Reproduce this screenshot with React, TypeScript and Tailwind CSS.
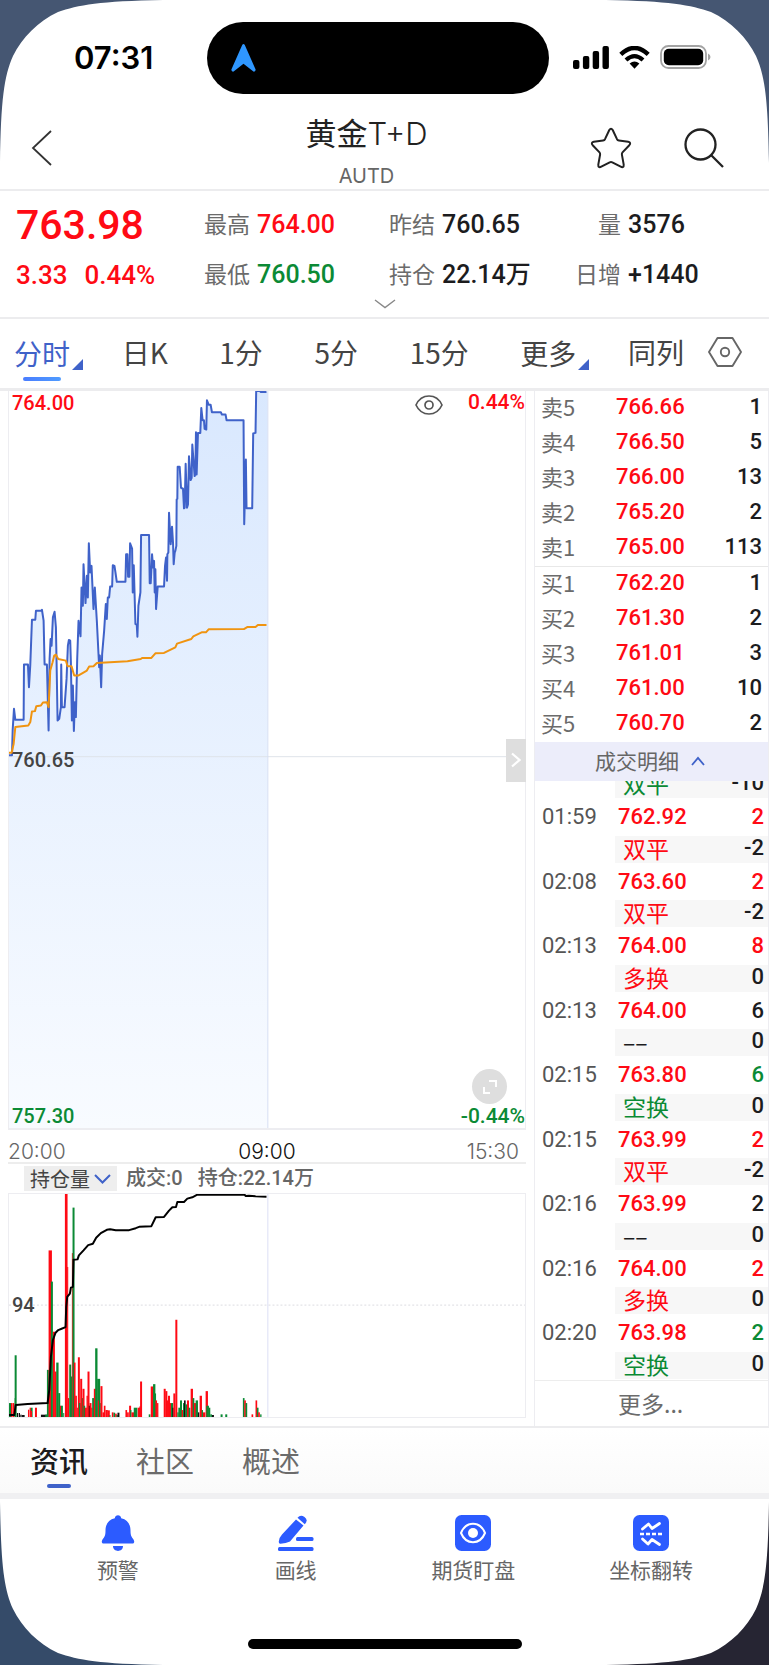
import React from "react";

const NUM = "font-['Roboto','Noto_Sans_CJK_SC',sans-serif] font-medium";

type Tone = "red" | "green" | "dark";

const toneClass: Record<Tone, string> = {
  red: "text-[#ff0a14]",
  green: "text-[#0b8a35]",
  dark: "text-[#1c1c1e]",
};

type Quote = { label: string; value: string; tone: Tone };

const quotes: Quote[][] = [
  [
    { label: "最高", value: "764.00", tone: "red" },
    { label: "最低", value: "760.50", tone: "green" },
  ],
  [
    { label: "昨结", value: "760.65", tone: "dark" },
    { label: "持仓", value: "22.14万", tone: "dark" },
  ],
  [
    { label: "量", value: "3576", tone: "dark" },
    { label: "日增", value: "+1440", tone: "dark" },
  ],
];

const asks: [string, string, string][] = [
  ["卖5", "766.66", "1"],
  ["卖4", "766.50", "5"],
  ["卖3", "766.00", "13"],
  ["卖2", "765.20", "2"],
  ["卖1", "765.00", "113"],
];

const bids: [string, string, string][] = [
  ["买1", "762.20", "1"],
  ["买2", "761.30", "2"],
  ["买3", "761.01", "3"],
  ["买4", "761.00", "10"],
  ["买5", "760.70", "2"],
];

type Trade = {
  time: string;
  price: string;
  volume: string;
  tone: Tone;
  kind: string;
  kindTone: Tone;
  delta: string;
};

const trades: Trade[] = [
  { time: "01:59", price: "762.92", volume: "2", tone: "red", kind: "双平", kindTone: "red", delta: "-2" },
  { time: "02:08", price: "763.60", volume: "2", tone: "red", kind: "双平", kindTone: "red", delta: "-2" },
  { time: "02:13", price: "764.00", volume: "8", tone: "red", kind: "多换", kindTone: "red", delta: "0" },
  { time: "02:13", price: "764.00", volume: "6", tone: "dark", kind: "––", kindTone: "dark", delta: "0" },
  { time: "02:15", price: "763.80", volume: "6", tone: "green", kind: "空换", kindTone: "green", delta: "0" },
  { time: "02:15", price: "763.99", volume: "2", tone: "red", kind: "双平", kindTone: "red", delta: "-2" },
  { time: "02:16", price: "763.99", volume: "2", tone: "dark", kind: "––", kindTone: "dark", delta: "0" },
  { time: "02:16", price: "764.00", volume: "2", tone: "red", kind: "多换", kindTone: "red", delta: "0" },
  { time: "02:20", price: "763.98", volume: "2", tone: "green", kind: "空换", kindTone: "green", delta: "0" },
];

const PRICE =
  "24,1130 33,1130 35,1055 39,990 43,1023 68,1023 69,857 81,857 84,925 88,857 93,722 103,722 105,695 121,695 123,692 128,725 131,857 138,857 143,1055 146,840 149,780 152,800 156,715 161,698 165,745 167,850 170,1025 175,1020 180,985 181,857 183,985 191,985 197,900 201,800 204,783 208,785 210,850 213,1025 216,920 219,1057 222,970 225,1015 229,840 233,725 239,772 242,625 246,680 248,555 254,672 258,590 261,655 264,492 268,580 272,560 278,690 282,625 288,725 295,865 297,830 301,925 304,825 310,755 315,675 318,720 321,655 325,655 328,622 334,622 336,558 341,560 344,580 348,608 374,608 376,525 380,525 382,593 386,593 388,492 394,508 396,640 399,558 404,735 408,737 410,773 413,680 419,640 421,467 445,467 447,612 450,612 454,525 457,565 460,545 462,640 464,570 466,690 471,622 490,622 493,560 496,535 499,605 500,525 503,520 505,400 510,495 514,442 517,490 519,555 522,520 524,515 527,500 528,360 530,358 531,262 537,262 541,325 547,328 550,387 552,385 555,253 559,385 562,375 565,230 570,302 573,295 575,195 582,290 584,285 586,158 588,285 592,160 599,160 602,85 606,122 610,122 612,148 617,150 619,62 624,75 630,75 634,98 661,98 664,105 675,105 678,122 729,122 731,435 736,240 738,387 755,387 758,162 765,160 767,34 778,34 781,37 798,37";

const AVERAGE =
  "24,1122 32,1122 38,1095 43,1045 82,1040 88,1030 93,998 102,997 106,982 120,980 126,971 138,970 143,985 148,875 155,850 160,830 165,827 172,840 195,845 200,862 212,862 220,890 232,890 258,875 265,863 278,862 288,852 380,847 420,840 424,837 452,837 464,823 490,822 524,805 529,794 572,780 578,772 603,760 616,760 624,751 730,750 740,744 765,744 772,738 798,738";

const HOLDING =
  "24,676 40,676 44,646 80,643 140,640 145,600 150,500 156,450 164,428 172,420 182,416 194,411 196,350 199,320 207,310 210,292 216,290 218,208 230,207 234,195 248,180 262,164 276,160 286,142 300,128 318,118 328,116 345,119 385,119 405,113 415,109 452,107 465,80 490,79 505,60 515,50 526,49 530,34 550,34 560,24 575,20 590,12 732,12 735,16 745,15 765,17 798,18";

/* [left, width, top, colour] */
const bars: [number, number, number, "r" | "g" | "k"][] = [
  [24, 6, 640, "g"], [30, 5, 640, "r"], [36, 4, 640, "r"], [41, 6, 496, "g"], [41, 4, 625, "g"], [48, 4, 670, "k"],
  [54, 3, 670, "k"], [58, 4, 675, "k"], [63, 8, 676, "k"], [81, 4, 660, "r"], [86, 4, 654, "r"], [90, 5, 654, "g"],
  [90, 3, 664, "r"], [102, 6, 654, "r"], [120, 18, 675, "k"], [133, 7, 675, "g"], [138, 6, 540, "g"],
  [143, 10, 180, "r"], [150, 6, 274, "g"], [156, 6, 425, "r"], [161, 6, 545, "r"], [166, 7, 518, "g"],
  [172, 6, 610, "g"], [177, 4, 648, "r"], [180, 6, 648, "g"], [187, 3, 670, "g"], [192, 8, 10, "r"], [199, 3, 230, "r"],
  [201, 4, 625, "r"], [205, 6, 524, "g"], [210, 5, 560, "g"], [213, 3, 188, "r"], [215, 6, 51, "g"], [219, 5, 518, "r"],
  [223, 5, 618, "r"], [228, 3, 654, "r"], [231, 6, 502, "r"], [234, 6, 640, "g"], [238, 6, 567, "r"],
  [243, 5, 625, "g"], [245, 6, 597, "r"], [248, 5, 648, "g"], [252, 6, 654, "r"], [257, 4, 618, "r"],
  [260, 6, 545, "r"], [264, 5, 648, "k"], [266, 6, 640, "r"], [271, 4, 654, "r"], [274, 6, 625, "g"],
  [279, 6, 597, "r"], [283, 7, 475, "g"], [289, 9, 567, "g"], [291, 3, 632, "r"], [297, 3, 640, "g"],
  [299, 6, 589, "r"], [305, 5, 668, "r"], [309, 5, 648, "r"], [314, 7, 661, "r"], [320, 7, 662, "r"],
  [326, 3, 676, "g"], [333, 5, 668, "r"], [338, 5, 669, "g"], [343, 5, 672, "r"], [347, 4, 676, "g"], [350, 6, 669, "k"],
  [374, 5, 661, "r"], [379, 5, 668, "r"], [385, 6, 648, "r"], [388, 4, 661, "g"], [392, 8, 668, "r"],
  [399, 11, 654, "g"], [411, 8, 654, "r"], [416, 4, 650, "r"], [418, 6, 575, "r"], [444, 5, 674, "g"],
  [450, 9, 590, "r"], [457, 7, 583, "g"], [462, 4, 611, "g"], [464, 5, 632, "r"], [469, 4, 640, "r"],
  [489, 6, 597, "r"], [494, 6, 604, "r"], [499, 4, 632, "r"], [502, 6, 618, "r"], [507, 4, 640, "r"],
  [511, 6, 640, "g"], [515, 4, 654, "k"], [518, 6, 611, "r"], [524, 6, 389, "r"], [530, 4, 668, "g"],
  [533, 6, 654, "g"], [538, 6, 632, "g"], [543, 4, 661, "r"], [547, 5, 640, "g"], [550, 5, 632, "k"],
  [554, 6, 644, "g"], [559, 6, 632, "r"], [564, 5, 654, "g"], [570, 7, 597, "r"], [576, 5, 625, "g"],
  [580, 6, 640, "r"], [585, 7, 632, "g"], [592, 4, 668, "k"], [597, 7, 618, "r"], [603, 4, 661, "g"],
  [607, 7, 668, "r"], [615, 7, 604, "r"], [617, 8, 648, "g"], [624, 5, 654, "g"], [629, 5, 674, "g"],
  [634, 6, 676, "k"], [660, 6, 674, "g"], [674, 6, 674, "g"], [727, 5, 625, "g"], [731, 5, 632, "r"],
  [735, 5, 640, "g"], [753, 5, 674, "r"], [765, 5, 632, "r"], [769, 5, 654, "g"], [773, 5, 668, "r"], [779, 4, 674, "g"],
];

const barFill = { r: "#ff0a14", g: "#0b8a35", k: "#111111" };

function Corner({ className, fill }: { className: string; fill: string }) {
  return (
    <svg viewBox="0 0 164 164" className={`pointer-events-none absolute size-[164px] ${className}`} aria-hidden="true">
      <path d="M0 0H163C100 1 78 5 58 12C38 21 22 38 13 56C4 76 1 100 0 163Z" fill={fill} />
    </svg>
  );
}

function StatusBar() {
  return (
    <div className="grid grid-cols-[1fr_342px_1fr] items-center pt-[22px] pr-[35px] pl-[22px]">
      <div className="pl-[52px] font-['Inter',sans-serif] text-[31px] leading-[38px] font-semibold text-black">07:31</div>
      <div className="flex h-[72px] items-center rounded-[36px] bg-black pl-[24px]">
        <svg viewBox="0 0 25 28" className="h-7 w-[25px]" aria-hidden="true">
          <path d="M11.2 1Q12.5-.8 13.8 1L24.6 25.5Q24.8 28 22.4 27.6L12.5 19.8L2.6 27.6Q.2 28 .4 25.5Z" fill="#2f97ff" />
        </svg>
      </div>
      <div className="flex items-center gap-[10px] pb-[2px] pl-[24px]">
        <svg viewBox="0 0 36 23" className="h-[23px] w-9 shrink-0" aria-hidden="true">
          <rect x="0" y="14" width="6.4" height="9" rx="2" />
          <rect x="9.9" y="10" width="6.4" height="13" rx="2" />
          <rect x="19.7" y="5" width="6.4" height="18" rx="2" />
          <rect x="29.5" y="0" width="6.4" height="23" rx="2" />
        </svg>
        <svg viewBox="0 0 31 23" className="h-[23px] w-[31px] shrink-0" aria-hidden="true">
          <path d="M1.8 8.4Q15.5-4.4 29.2 8.4" fill="none" stroke="#000" strokeWidth="4.4" />
          <path d="M7 14Q15.5 6.2 24 14" fill="none" stroke="#000" strokeWidth="4.2" />
          <path d="M10.6 17.6Q15.5 13.6 20.4 17.6L15.5 22.8Z" />
        </svg>
        <svg viewBox="0 0 51 24" className="h-6 w-[51px] shrink-0" aria-hidden="true">
          <rect x="1" y="1" width="45" height="22" rx="7.5" fill="none" stroke="#a3a3a3" strokeWidth="1.8" />
          <rect x="3.8" y="3.7" width="39.4" height="16.6" rx="5" />
          <path d="M48 8.5Q50.5 9.5 50.5 12T48 15.5Z" fill="#a3a3a3" />
        </svg>
      </div>
    </div>
  );
}

function TitleBar() {
  return (
    <header className="flex h-[97px] items-start border-b-2 border-[#ececee] pr-[44px] pl-[31px]">
      <button aria-label="返回" className="mt-[36px] w-[112px]">
        <svg viewBox="0 0 22 36" className="h-9 w-[22px]" fill="none" stroke="#333" strokeWidth="1.8">
          <path d="M20 1L2 18L20 35" />
        </svg>
      </button>
      <div className="flex flex-1 flex-col items-center font-['Noto_Sans_CJK_SC',sans-serif]">
        <h1 className="mt-[17px] text-[31px] leading-[42px] text-[#222]">
          黄金<span className="font-['Inter','Noto_Sans_CJK_SC',sans-serif] font-light">T+D</span>
        </h1>
        <p className="mt-[9px] font-['Inter',sans-serif] text-[20px] leading-6 text-[#666]">AUTD</p>
      </div>
      <div className="mt-[33px] flex gap-[51px]">
        <button aria-label="收藏">
          <svg viewBox="0 0 42 42" className="size-[42px]" fill="none" stroke="#222" strokeWidth="2" strokeLinejoin="round">
            <path d="M19.3 3Q21 .4 22.7 3L27 12.2Q27.6 13.3 28.9 13.5L38.2 14.8Q41.5 15.5 39.3 18.2L32.5 25.4Q31.7 26.3 31.9 27.6L33.7 37.6Q33.9 41.3 30.7 39.7L22.3 35.3Q21 34.7 19.7 35.3L11.3 39.7Q8.1 41.3 8.3 37.6L10.1 27.6Q10.3 26.3 9.5 25.4L2.7 18.2Q.5 15.5 3.8 14.8L13.1 13.5Q14.4 13.3 15 12.2Z" />
          </svg>
        </button>
        <button aria-label="搜索">
          <svg viewBox="0 0 42 42" className="size-[42px]" fill="none" stroke="#222" strokeWidth="2.3">
            <circle cx="17.5" cy="17.5" r="15" />
            <path d="M28 28L40 40" />
          </svg>
        </button>
      </div>
    </header>
  );
}

function QuotePanel() {
  return (
    <section className={`${NUM} border-b-2 border-[#ececee]`}>
      <div className="grid h-[108px] grid-cols-[188px_185px_186px_1fr] pt-[9px] pl-4 text-[25px]">
        <div className="text-[#ff0a14]">
          <div className="text-[41px] leading-[50px]">763.98</div>
          <div className="flex gap-[17px] text-[26px] leading-[50px]">
            <span>3.33</span>
            <span>0.44%</span>
          </div>
        </div>
        {quotes.map((group, i) => (
          <dl key={i} className="leading-[50px] whitespace-nowrap">
            {group.map((q) => (
              <div key={q.label} className="flex gap-[7px]">
                <dt className={`font-['Noto_Sans_CJK_SC',sans-serif] text-[23px] leading-[46px] font-normal text-[#6b6b6b] ${i === 2 ? "w-[46px] text-right" : ""}`}>
                  {q.label}
                </dt>
                <dd className={toneClass[q.tone]}>{q.value}</dd>
              </div>
            ))}
          </dl>
        ))}
      </div>
      <button aria-label="展开行情" className="flex h-[18px] w-full justify-center">
        <svg viewBox="0 0 22 10" className="h-[10px] w-[22px]" fill="none" stroke="#888" strokeWidth="1.4">
          <path d="M1 1L11 8.5L21 1" />
        </svg>
      </button>
    </section>
  );
}

function Wedge() {
  return (
    <svg viewBox="0 0 11 11" className="mt-6 -mr-[13px] ml-0.5 size-[11px]" aria-hidden="true">
      <path d="M11 0V11H0Z" fill="#3f62c9" />
    </svg>
  );
}

function PeriodTabs() {
  return (
    <nav className="flex h-[72px] items-start justify-between border-b-3 border-[#ececee] pt-4 pr-[27px] pl-[14px] font-['Noto_Sans_CJK_SC',sans-serif] text-[28px] leading-[34px] text-[#444]">
      <button className="flex flex-col text-[#3f62c9]">
        <span className="flex items-center">
          分时
          <Wedge />
        </span>
        <span className="mt-[7px] ml-[9px] h-1 w-[38px] rounded-full bg-linear-to-r from-[#4a7dff] to-[#4f9bff]" />
      </button>
      <button>日K</button>
      <button>1分</button>
      <button>5分</button>
      <button>15分</button>
      <button className="flex items-center">
        更多
        <Wedge />
      </button>
      <div className="flex gap-6">
        <button>同列</button>
        <button aria-label="设置">
          <svg viewBox="0 0 34 30" className="h-[30px] w-[34px]" fill="none" stroke="#666" strokeWidth="1.9" strokeLinejoin="round">
            <path d="M9.5 1H24.5L33 15L24.5 29H9.5L1 15Z" />
            <circle cx="17" cy="15" r="4.2" />
          </svg>
        </button>
      </div>
    </nav>
  );
}

function PricePlot() {
  return (
    <div className={`${NUM} relative flex h-[739px] flex-col justify-between border-x border-b-2 border-[#ededf1] pl-[3px] text-[20px] leading-[23px]`}>
      <svg viewBox="24 34 1551 2217" preserveAspectRatio="none" className="absolute inset-0 size-full" aria-label="分时走势">
        <defs>
          <linearGradient id="area" x1="0" y1="0" x2="0" y2="1">
            <stop offset="0" stopColor="#d9e8fe" />
            <stop offset="1" stopColor="#f8fbff" />
          </linearGradient>
        </defs>
        <path d={`M${PRICE.replace(/ /g, "L")}L801,37V2251H24Z`} fill="url(#area)" />
        <path d="M24 1134H1575" stroke="#dfe3ea" strokeWidth="3" />
        <path d="M802 34V2251" stroke="#d5def3" strokeWidth="3" />
        <polyline points={PRICE} fill="none" stroke="#3f62c9" strokeWidth="6" strokeLinejoin="round" />
        <polyline points={AVERAGE} fill="none" stroke="#f09410" strokeWidth="6" strokeLinejoin="round" />
      </svg>
      <div className="relative flex items-center justify-between">
        <span className="text-[#ff0a14]">764.00</span>
        <span className="flex gap-[25px] text-[21px] text-[#ff0a14]">
          <button aria-label="显示设置" className="mt-1">
            <svg viewBox="0 0 28 20" className="h-5 w-7" fill="none" stroke="#555" strokeWidth="1.7">
              <path d="M1 10C6.5-2 21.5-2 27 10C21.5 22 6.5 22 1 10Z" />
              <circle cx="14" cy="10" r="4" />
            </svg>
          </button>
          0.44%
        </span>
      </div>
      <div className="relative flex items-center justify-between text-[#444]">
        <span>760.65</span>
        <button aria-label="收起盘口" className="-mr-px flex h-[43px] w-5 items-center justify-center bg-[#dedede]">
          <svg viewBox="0 0 10 16" className="h-4 w-[10px]" fill="none" stroke="#fff" strokeWidth="2.2">
            <path d="M1 1.5L8.5 8L1 14.5" />
          </svg>
        </button>
      </div>
      <div className="relative flex items-end justify-between text-[#0b8a35]">
        <span>757.30</span>
        <span className="text-[21px]">-0.44%</span>
        <button aria-label="全屏" className="absolute right-[18px] bottom-[24px] flex size-[35px] items-center justify-center rounded-full bg-[#dedede]">
          <svg viewBox="0 0 16 16" className="size-4" fill="none" stroke="#fff" strokeWidth="2">
            <path d="M7 2H14V8M2 8V14H8" />
          </svg>
        </button>
      </div>
    </div>
  );
}

function HoldingPlot() {
  return (
    <div className={`${NUM} relative flex h-[225px] items-center border border-[#ededf1] pl-[3px] text-[20px] leading-[25px] text-[#444]`}>
      <svg viewBox="24 10 1551 672" preserveAspectRatio="none" className="absolute inset-0 size-full" aria-label="持仓量">
        <path d="M24 345H1575" stroke="#e4e4e8" strokeWidth="4" strokeDasharray="6 6" />
        <path d="M802 10V682" stroke="#dcdff5" strokeWidth="3" />
        {bars.map(([x, w, top, c], i) => (
          <rect key={i} x={x} y={top} width={w} height={682 - top} fill={barFill[c]} />
        ))}
        <polyline points={HOLDING} fill="none" stroke="#000" strokeWidth="6" strokeLinejoin="round" />
      </svg>
      <span className="relative">94</span>
    </div>
  );
}

function ChartColumn() {
  return (
    <div className="min-w-0 flex-1 px-2 pb-2">
      <PricePlot />
      <div className="grid h-[34px] grid-cols-3 items-end border-b-2 border-[#ededed] font-['Inter',sans-serif] text-[21px] leading-[21px] font-light text-[#666]">
        <span>20:00</span>
        <span className="text-center text-[#111]">09:00</span>
        <span className="pr-[7px] text-right">15:30</span>
      </div>
      <div className={`${NUM} flex h-[29px] items-center gap-[9px] pl-4 text-[20px] leading-[25px] whitespace-nowrap text-[#666]`}>
        <button className="flex h-[25px] items-center gap-[4px] bg-[#eeeeee] px-[6px] font-['Noto_Sans_CJK_SC',sans-serif] font-normal text-[#444]">
          持仓量
          <svg viewBox="0 0 17 10" className="h-[10px] w-[17px]" fill="none" stroke="#3f62c9" strokeWidth="2">
            <path d="M1 1L8.5 8.5L16 1" />
          </svg>
        </button>
        <span>成交:0</span>
        <span className="pl-[6px]">持仓:22.14万</span>
      </div>
      <HoldingPlot />
    </div>
  );
}

function Book({ rows, className }: { rows: [string, string, string][]; className: string }) {
  return (
    <table className={`${NUM} w-full table-fixed border-collapse text-[22px] leading-[31px] ${className}`}>
      <tbody>
        {rows.map(([label, price, volume]) => (
          <tr key={label} className="h-[35px] align-top">
            <th scope="row" className="w-[81px] p-0 pl-[6px] text-left font-['Noto_Sans_CJK_SC',sans-serif] font-normal text-[#6b6b6b]">
              {label}
            </th>
            <td className="p-0 text-[#ff0a14]">{price}</td>
            <td className="w-[60px] p-0 pr-[6px] text-right text-[#1c1c1e]">{volume}</td>
          </tr>
        ))}
      </tbody>
    </table>
  );
}

function DealRow({ kind, tone, delta }: { kind: string; tone: Tone; delta: string }) {
  return (
    <tr className="h-[27px]">
      <td className="p-0" />
      <td className={`bg-[#f7f7f7] p-0 pl-[8px] align-top font-['Noto_Sans_CJK_SC',sans-serif] text-[23px] leading-[25px] font-normal ${toneClass[tone]}`}>{kind}</td>
      <td className="bg-[#f7f7f7] p-0 pr-[4px] text-right align-top leading-[24px] text-[#1c1c1e]">{delta}</td>
    </tr>
  );
}

function OrderColumn() {
  return (
    <aside className="flex w-[235px] flex-col border-x border-[#ededf1]">
      <Book rows={asks} className="border-b border-[#e8e8e8]" />
      <Book rows={bids} className="" />
      <button className="flex h-[39px] items-center justify-center gap-3 bg-[#ecedfa] pr-[3px] font-['Noto_Sans_CJK_SC',sans-serif] text-[21px] text-[#666]">
        成交明细
        <svg viewBox="0 0 14 10" className="h-[10px] w-[14px]" fill="none" stroke="#3f62c9" strokeWidth="1.8">
          <path d="M1 9L7 2L13 9" />
        </svg>
      </button>
      <div className="flex h-[600px] flex-col justify-end overflow-hidden border-b border-[#ededed] pb-px">
        <table className={`${NUM} w-full shrink-0 table-fixed border-collapse text-[22px] leading-[27px]`}>
          <colgroup>
            <col className="w-[80px]" />
            <col />
            <col className="w-[60px]" />
          </colgroup>
          <tbody>
            <DealRow kind="双平" tone="green" delta="-10" />
            {trades.map((t, i) => (
              <React.Fragment key={i}>
                <tr className={i % 2 ? "h-[37px]" : "h-[38px]"}>
                  <td className="p-0 pl-[7px] font-normal text-[#555]">{t.time}</td>
                  <td className="p-0 pl-[3px] text-[#ff0a14]">{t.price}</td>
                  <td className={`p-0 pr-[4px] text-right ${toneClass[t.tone]}`}>{t.volume}</td>
                </tr>
                <DealRow kind={t.kind} tone={t.kindTone} delta={t.delta} />
              </React.Fragment>
            ))}
          </tbody>
        </table>
      </div>
      <button className="flex flex-1 items-center pl-[83px] font-['Noto_Sans_CJK_SC',sans-serif] text-[23px] text-[#6b6b6b]">更多...</button>
    </aside>
  );
}

function InfoTabs() {
  return (
    <nav className="flex h-[65px] gap-[48px] bg-linear-to-b from-white to-[#fafafa] pt-[12px] pl-[30px] font-['Noto_Sans_CJK_SC',sans-serif] text-[29px] leading-[40px] text-[#6b6b6b]">
      <button className="flex flex-col items-center font-medium text-[#1c1c1e]">
        资讯
        <span className="mt-[4px] h-1 w-6 rounded-full bg-[#3f62c9]" />
      </button>
      <button className="self-start">社区</button>
      <button className="self-start">概述</button>
    </nav>
  );
}

const tools = [
  {
    label: "预警",
    icon: (
      <g fill="#2c5bff">
        <path d="M14.8 3.2C15 -.8 21 -.8 21.2 3.2C27.5 4.5 30.5 9.5 30.5 15.5C30.5 20.5 31.5 22 33.5 24.5C35 27 34 28.6 32 28.6H4C2 28.6 1 27 2.5 24.5C4.5 22 5.5 20.5 5.5 15.5C5.5 9.5 8.5 4.5 14.8 3.2Z" />
        <path d="M13 31H23C23 37.5 13 37.5 13 31Z" />
      </g>
    ),
  },
  {
    label: "画线",
    icon: (
      <g fill="#2c5bff">
        <path d="M18 4.5L25.5 10.5L12 26.5Q8 28.5 2.5 28.8Q.5 29 .8 26.5Q1.5 22 4 19.5Z" />
        <path d="M19.5 2.8Q22.5 -1 26.5 2Q30.5 5 27 9L26.8 9.2Z" />
        <rect x="18" y="22" width="17.5" height="4" rx="1.5" />
        <rect x="0" y="32" width="35.5" height="4" rx="1.5" />
      </g>
    ),
  },
  {
    label: "期货盯盘",
    icon: (
      <g>
        <rect width="36" height="36" rx="6.5" fill="#2c5bff" />
        <path d="M6 18C11 5.8 25 5.8 30 18C25 30.2 11 30.2 6 18Z" fill="none" stroke="#fff" strokeWidth="2" />
        <circle cx="18" cy="18" r="5" fill="#fff" />
      </g>
    ),
  },
  {
    label: "坐标翻转",
    icon: (
      <g>
        <rect width="36" height="36" rx="6.5" fill="#2c5bff" />
        <g fill="none" stroke="#fff" strokeWidth="2.8" strokeLinejoin="round" strokeLinecap="round">
          <path d="M9.5 14L15.5 9L19 13.5L26.5 8.5" />
          <path d="M9.5 24L15 29L19 24.5L26.5 29.5" />
        </g>
        <path d="M7 19H29" stroke="#fff" strokeWidth="2.4" strokeDasharray="4 2" />
      </g>
    ),
  },
];

function Toolbar() {
  return (
    <footer className="border-t-6 border-[#f0f0f2] px-[29px] pt-4 pb-4">
      <div className="grid grid-cols-4">
        {tools.map((t) => (
          <button key={t.label} className="flex flex-col items-center gap-[2px] font-['Noto_Sans_CJK_SC',sans-serif] text-[21px] leading-8 text-[#666]">
            <svg viewBox="0 0 36 36" className="size-9" aria-hidden="true">
              {t.icon}
            </svg>
            {t.label}
          </button>
        ))}
      </div>
      <div className="mx-auto mt-[54px] h-[10px] w-[274px] rounded-full bg-black" />
    </footer>
  );
}

export default function App() {
  return (
    <main className="relative overflow-hidden bg-white">
      <StatusBar />
      <TitleBar />
      <QuotePanel />
      <PeriodTabs />
      <div className="flex border-b-2 border-[#ececee]">
        <ChartColumn />
        <OrderColumn />
      </div>
      <InfoTabs />
      <Toolbar />
      <Corner className="top-0 left-0" fill="#455672" />
      <Corner className="top-0 right-0 -scale-x-100" fill="#455672" />
      <Corner className="bottom-0 left-0 -scale-y-100" fill="#354b69" />
      <Corner className="right-0 bottom-0 rotate-180" fill="#262533" />
    </main>
  );
}
